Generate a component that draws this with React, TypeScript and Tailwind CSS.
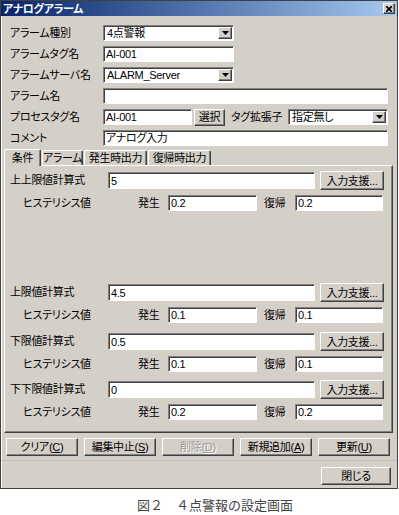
import type { ReactNode } from 'react';

const sunken =
  'bg-white border border-t-[#808080] border-l-[#808080] border-r-[#ffffff] border-b-[#ffffff] shadow-[inset_1px_1px_0_#404040]';
const raised =
  'bg-[#d4d0c8] border border-t-[#ffffff] border-l-[#ffffff] border-r-[#404040] border-b-[#404040] shadow-[inset_-1px_-1px_0_#808080]';

function Arrow() {
  return (
    <div className={`${raised} ml-auto w-[14px] h-[12px] flex items-center justify-center shrink-0`}>
      <svg width="7" height="4" viewBox="0 0 7 4">
        <path d="M0 0h7L3.5 4z" fill="#000" />
      </svg>
    </div>
  );
}

function Select({ text, className }: { text: string; className: string }) {
  return (
    <div className={`${sunken} ${className} h-[16px] flex items-center pl-[3px] pr-px`}>
      <span className="leading-[14px]">{text}</span>
      <Arrow />
    </div>
  );
}

function Input({ text = '', className, gray = false }: { text?: string; className: string; gray?: boolean }) {
  return (
    <div
      className={`${sunken} ${className} ${gray ? 'bg-[#d4d0c8]' : ''} flex items-center pl-[2px] leading-[14px]`}
    >
      {text}
    </div>
  );
}

function Button({ children, className, disabled = false }: { children: ReactNode; className: string; disabled?: boolean }) {
  return (
    <div
      className={`${raised} ${className} flex items-center justify-center leading-[14px] whitespace-nowrap ${
        disabled ? 'text-[#9a9892] [text-shadow:1px_1px_0_#ffffff]' : 'text-black'
      }`}
    >
      {children}
    </div>
  );
}

function FormRow({ label, children }: { label: string; children: ReactNode }) {
  return (
    <div className="flex items-center h-[16px]">
      <span className="w-[102px] pl-[9px] shrink-0 whitespace-nowrap">{label}</span>
      {children}
    </div>
  );
}

function Group({ label, formula, on, off, className }: { label: string; formula: string; on: string; off: string; className: string }) {
  return (
    <div className={className}>
      <div className="flex items-center h-[19px]">
        <span className="w-[98px] shrink-0 whitespace-nowrap">{label}</span>
        <Input text={formula} className="w-[207px] h-[17px]" />
        <Button className="ml-[5px] w-[64px] h-[19px]">入力支援...</Button>
      </div>
      <div className="flex items-center h-[16px] mt-[5px] pl-[13px]">
        <span className="w-[115px] shrink-0 whitespace-nowrap">ヒステリシス値</span>
        <span className="w-[30px] shrink-0">発生</span>
        <Input text={on} className="w-[89px] h-[16px]" />
        <span className="ml-[7px] w-[31px] shrink-0">復帰</span>
        <Input text={off} className="w-[88px] h-[16px]" />
      </div>
    </div>
  );
}

export default function App() {
  const tabs = [
    { t: '条件', w: 'w-[37px]', sel: true },
    { t: 'アラーム', w: 'w-[41px]', sel: false },
    { t: '発生時出力', w: 'w-[63px]', sel: false },
    { t: '復帰時出力', w: 'w-[63px]', sel: false },
  ];

  return (
    <div className="w-[399px] h-[515px] bg-white text-[11px] tracking-[-0.3px] [font-feature-settings:'palt'] text-black font-['Liberation_Sans','Noto_Sans_CJK_JP',sans-serif] overflow-hidden">
      <div className="w-[398px] h-[489px] bg-[#d4d0c8] border border-[#404040] shadow-[inset_1px_1px_0_#ffffff]">
        <div className="h-[15px] bg-linear-to-r from-[#0a246a] to-[#a6caf0] flex items-center pl-[2px] pr-[2px]">
          <span className="text-white font-bold leading-[14px]">アナログアラーム</span>
          <div className={`${raised} ml-auto w-[12px] h-[11px] flex items-center justify-center`}>
            <svg width="6" height="6" viewBox="0 0 6 6">
              <path d="M0 0L6 6M6 0L0 6" stroke="#000" strokeWidth="1.6" />
            </svg>
          </div>
        </div>

        <div className="flex flex-col gap-[5px] mt-[9px]">
          <FormRow label="アラーム種別">
            <Select text="4点警報" className="w-[131px]" />
          </FormRow>
          <FormRow label="アラームタグ名">
            <Input text="AI-001" className="w-[131px] h-[16px]" />
          </FormRow>
          <FormRow label="アラームサーバ名">
            <Select text="ALARM_Server" className="w-[131px]" />
          </FormRow>
          <FormRow label="アラーム名">
            <Input className="w-[285px] h-[16px]" />
          </FormRow>
          <FormRow label="プロセスタグ名">
            <Input text="AI-001" gray className="w-[89px] h-[16px]" />
            <Button className="ml-[2px] w-[31px] h-[17px]">選択</Button>
            <span className="ml-[6px] w-[57px] shrink-0 whitespace-nowrap">タグ拡張子</span>
            <Select text="指定無し" className="w-[100px]" />
          </FormRow>
          <FormRow label="コメント">
            <Input text="アナログ入力" className="w-[285px] h-[16px]" />
          </FormRow>
        </div>

        <div className="flex items-end ml-[3px] mt-[2px] h-[17px] gap-[1px]">
          {tabs.map((tab) => (
            <div
              key={tab.t}
              className={`${tab.w} flex items-center justify-center whitespace-nowrap border-t border-l border-r border-t-[#ffffff] border-l-[#ffffff] border-r-[#404040] rounded-t-[2px] leading-[14px] ${
                tab.sel ? 'h-[17px] relative z-10 -mb-px bg-[#d4d0c8] shadow-[inset_-1px_0_0_#808080]' : 'h-[15px] shadow-[inset_-1px_0_0_#808080]'
              }`}
            >
              {tab.t}
            </div>
          ))}
        </div>

        <div className="ml-[3px] w-[389px] h-[268px] border border-t-[#ffffff] border-l-[#ffffff] border-r-[#404040] border-b-[#404040] shadow-[inset_-1px_-1px_0_#808080] pl-[5px] pt-[5px]">
          <Group label="上上限値計算式" formula="5" on="0.2" off="0.2" className="" />
          <Group label="上限値計算式" formula="4.5" on="0.1" off="0.1" className="mt-[72px]" />
          <Group label="下限値計算式" formula="0.5" on="0.1" off="0.1" className="mt-[9px]" />
          <Group label="下下限値計算式" formula="0" on="0.2" off="0.2" className="mt-[8px]" />
        </div>

        <div className="flex gap-[6px] ml-[5px] mt-[5px]">
          <Button className="w-[72px] h-[18px]">
            クリア(<u>C</u>)
          </Button>
          <Button className="w-[72px] h-[18px]">
            編集中止(<u>S</u>)
          </Button>
          <Button className="w-[72px] h-[18px]" disabled>
            削除(<u>D</u>)
          </Button>
          <Button className="w-[72px] h-[18px]">
            新規追加(<u>A</u>)
          </Button>
          <Button className="w-[72px] h-[18px]">
            更新(<u>U</u>)
          </Button>
        </div>

        <div className="mt-[4px] h-px bg-[#c4c0b8]" />

        <div className="flex justify-end mt-[6px] pr-[6px]">
          <Button className="w-[70px] h-[18px]">閉じる</Button>
        </div>
      </div>

      <div className="mt-[9px] pl-[137px] text-[13px] leading-[14px] tracking-normal [font-feature-settings:normal] text-[#444] font-['Noto_Sans_CJK_JP',sans-serif]">
        図２　４点警報の設定画面
      </div>
    </div>
  );
}
